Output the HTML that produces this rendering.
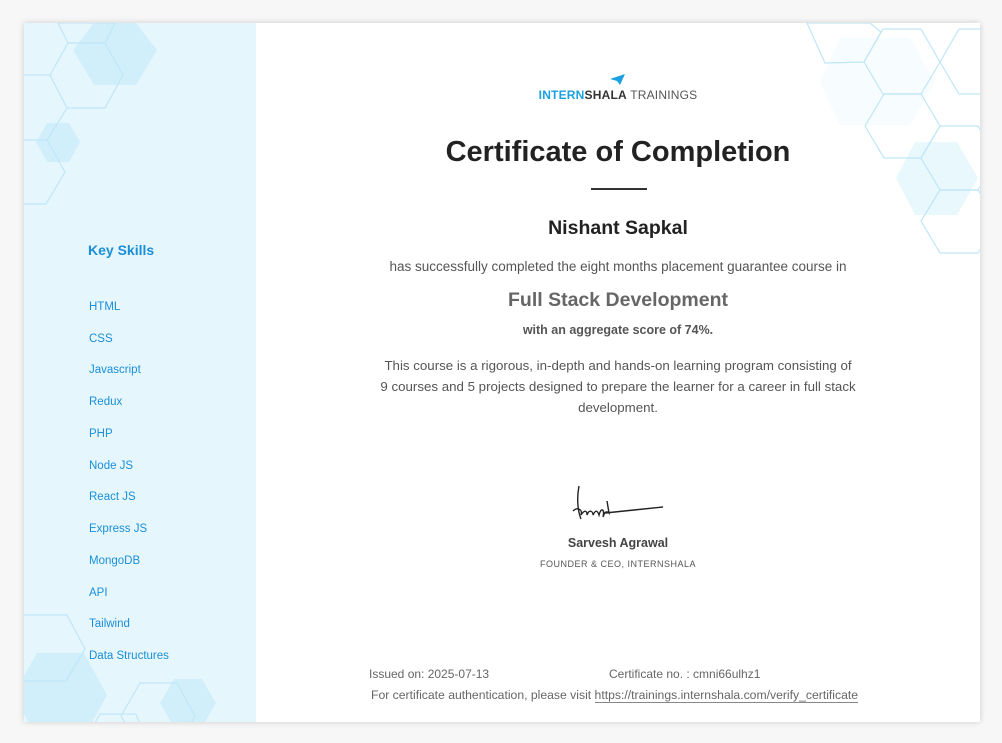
<!DOCTYPE html>
<html><head><meta charset="utf-8"><style>
*{margin:0;padding:0;box-sizing:border-box}
body{width:1002px;height:743px;background:#f7f7f7;font-family:"Liberation Sans",sans-serif;position:relative;overflow:hidden}
.card{position:absolute;left:24px;top:23px;width:956px;height:699px;background:#fff;box-shadow:0 0 6px rgba(0,0,0,.18);overflow:hidden}
.side{position:absolute;left:0;top:0;width:232px;height:699px;background:#e6f6fd}
svg.bg{position:absolute;left:0;top:0}
.ks{position:absolute;left:64px;top:219px;color:#1a8fd8;font-weight:bold;font-size:14px}
.sk{position:absolute;left:65px;color:#1a8fd8;font-size:11.5px}
.c{position:absolute;left:232px;width:724px;text-align:center}
</style></head><body>
<div class="card">
<div class="side"></div>
<svg class="bg" width="956" height="699" viewBox="24 23 956 699">
<g fill="#c7ecf9" opacity=".7">
<polygon points="73,50 94,23 136,23 157,50 136,85 94,85"/>
<polygon points="36,142 47,123 69,123 80,142 69,162 47,162"/>
<polygon points="13,695 37,653 84,653 107,695 84,737 37,737"/>
<polygon points="160,703 174,679 202,679 216,703 202,727 174,727"/>
<polygon points="896,178 915,142 957,142 978,178 957,215 915,215" opacity=".6"/>
<polygon points="820,82 840,38 910,38 935,82 910,125 840,125" opacity=".2"/>
</g>
<g fill="none" stroke="#bfe6f8" stroke-width="1.2">
<polygon points="50,75 68,43 105,43 123,75 105,108 67,108"/>
<polygon points="68,43 58,23 115,23 105,43"/>
<polygon points="-10,140 24,140 47,140 65,172 46,204 -10,204"/>
<line x1="24" y1="75" x2="50" y2="75"/><line x1="67" y1="108" x2="47" y2="140"/>
<polygon points="-10,615 67,615 85,649 66,681 -10,681"/>
<polygon points="121,716 140,683 177,683 195,716 177,750 140,750"/>
<polygon points="80,750 100,714 136,714 150,750"/>
<polygon points="807,23 825,63 864,62 881,32 870,23"/>
<polygon points="864,62 883,29 921,29 940,62 921,94 883,94"/>
<polygon points="865,126 884,94 921,94 940,126 921,158 884,158"/>
<polygon points="940,62 959,29 997,29 1016,62 997,94 959,94"/>
<polygon points="921,158 940,126 978,126 997,158 978,190 940,190"/>
<polygon points="921,221 940,190 978,190 997,221 978,253 940,253"/>
</g>
</svg>
<div class="ks">Key Skills</div>
<div class="sk" style="top:278px">HTML</div>
<div class="sk" style="top:310px">CSS</div>
<div class="sk" style="top:341px">Javascript</div>
<div class="sk" style="top:373px">Redux</div>
<div class="sk" style="top:405px">PHP</div>
<div class="sk" style="top:437px">Node JS</div>
<div class="sk" style="top:468px">React JS</div>
<div class="sk" style="top:500px">Express JS</div>
<div class="sk" style="top:532px">MongoDB</div>
<div class="sk" style="top:564px">API</div>
<div class="sk" style="top:595px">Tailwind</div>
<div class="sk" style="top:627px">Data Structures</div>

<svg style="position:absolute;left:586px;top:51px" width="16" height="12" viewBox="0 0 16 12"><path d="M0 5 L15 0 L10 11 L7 7 Z" fill="#1ba1e2"/></svg>
<div class="c" style="top:65px;font-size:12px;letter-spacing:.2px;"><span style="color:#1ba1e2;font-weight:bold">INTERN</span><span style="color:#333;font-weight:bold">SHALA</span><span style="color:#555"> TRAININGS</span></div>
<div class="c" style="top:113px;font-size:29px;font-weight:bold;color:#222">Certificate of Completion</div>
<div style="position:absolute;left:567px;top:165px;width:56px;height:2px;background:#333"></div>
<div class="c" style="top:194px;font-size:19.5px;font-weight:bold;color:#222">Nishant Sapkal</div>
<div class="c" style="top:236px;font-size:13.5px;color:#555">has successfully completed the eight months placement guarantee course in</div>
<div class="c" style="top:266px;font-size:19.5px;font-weight:bold;color:#666">Full Stack Development</div>
<div class="c" style="top:300px;font-size:12.5px;font-weight:bold;color:#555">with an aggregate score of 74%.</div>
<div class="c" style="top:332px;font-size:13.3px;color:#555;line-height:21px;white-space:nowrap">This course is a rigorous, in-depth and hands-on learning program consisting of<br>9 courses and 5 projects designed to prepare the learner for a career in full stack<br>development.</div>
<svg style="position:absolute;left:545px;top:458px" width="100" height="42" viewBox="0 0 100 42"><path d="M10 5 C8 15 8 28 12 38 M4 30 C8 26 14 28 12 34 C16 28 18 30 18 34 C20 28 24 30 24 34 C26 30 28 28 30 34 C32 26 36 28 34 36 C36 30 38 30 40 32 L38 20 M36 32 C55 30 75 28 94 26" fill="none" stroke="#222" stroke-width="1.4"/></svg>
<div class="c" style="top:513px;font-size:12.5px;font-weight:bold;color:#444">Sarvesh Agrawal</div>
<div class="c" style="top:536px;font-size:9px;letter-spacing:.5px;color:#555">FOUNDER &amp; CEO, INTERNSHALA</div>
<div style="position:absolute;left:345px;top:644px;font-size:12px;color:#666">Issued on: 2025-07-13</div>
<div style="position:absolute;left:585px;top:644px;font-size:12px;color:#666">Certificate no. : cmni66ulhz1</div>
<div style="position:absolute;left:347px;top:665px;font-size:12.2px;color:#666;white-space:nowrap">For certificate authentication, please visit <span style="border-bottom:1px solid #888">https://trainings.internshala.com/verify_certificate</span></div>
</div>
</body></html>
